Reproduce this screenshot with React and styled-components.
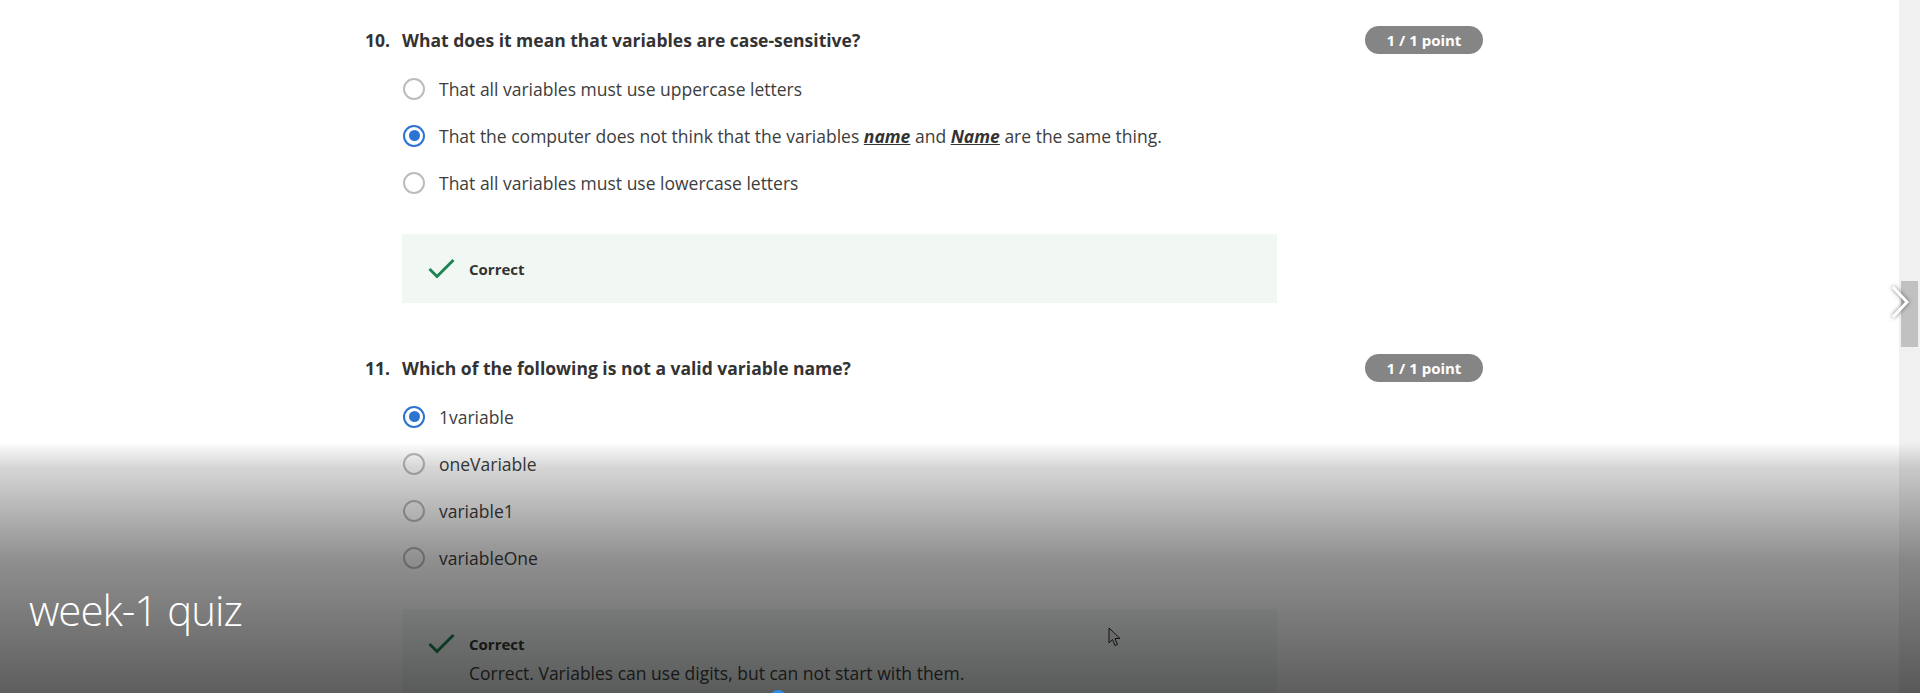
import React from "react";
import styled, { createGlobalStyle } from "styled-components";

const GlobalStyle = createGlobalStyle`
  html, body {
    margin: 0;
    padding: 0;
    background: #ffffff;
    overflow: hidden;
  }
  body {
    font-family: "Open Sans", "Liberation Sans", sans-serif;
    color: #333333;
  }
`;

const Page = styled.div`
  position: relative;
  display: flex;
  width: 1920px;
  height: 693px;
  overflow: hidden;
  background: #ffffff;
`;

const Content = styled.div`
  flex: 1;
  padding: 26px 0 0 365px;
`;

const Column = styled.div`
  width: 1118px;
`;

const Question = styled.section`
  margin-bottom: 51px;
`;

const QuestionHeader = styled.div`
  display: flex;
  align-items: center;
  height: 28px;
`;

const Number = styled.span`
  width: 37px;
  font-size: 17.5px;
  font-weight: 700;
  color: #333333;
`;

const Title = styled.h3`
  flex: 1;
  margin: 0;
  font-size: 17.5px;
  font-weight: 700;
  color: #333333;
`;

const Badge = styled.span`
  display: inline-flex;
  align-items: center;
  justify-content: center;
  width: 118px;
  height: 28px;
  border-radius: 14px;
  background: #858585;
  color: #ffffff;
  font-size: 15px;
  font-weight: 700;
`;

const Options = styled.div`
  margin-top: 11px;
  padding-left: 37px;
`;

const Option = styled.label`
  display: flex;
  align-items: center;
  height: 47px;
  gap: 14px;
  font-size: 17.5px;
  color: #3d3d3d;

  b {
    font-weight: 700;
    font-style: italic;
    text-decoration: underline;
    color: #333333;
  }
`;

const Radio = styled.span`
  position: relative;
  box-sizing: border-box;
  width: 22px;
  height: 22px;
  margin-left: 1px;
  border-radius: 50%;
  border: 2px solid ${(p) => (p.checked ? "#2b74d0" : "#bcbcbc")};
  flex-shrink: 0;

  &::after {
    content: "";
    display: ${(p) => (p.checked ? "block" : "none")};
    position: absolute;
    left: 3.5px;
    top: 3.5px;
    width: 11px;
    height: 11px;
    border-radius: 50%;
    background: #2b74d0;
  }
`;

const Feedback = styled.div`
  width: 875px;
  margin: 28px 0 0 37px;
  padding: 24px 26px;
  box-sizing: border-box;
  min-height: 69px;
  background: #f1f8f4;
`;

const FeedbackHead = styled.div`
  display: flex;
  align-items: center;
  gap: 14px;
  height: 21px;
  font-size: 15px;
  font-weight: 700;
  color: #333333;
`;

const FeedbackText = styled.p`
  margin: 7px 0 0 41px;
  font-size: 17.5px;
  line-height: 24px;
  color: #3d3d3d;
`;

const Scrollbar = styled.div`
  width: 21px;
  background: #f0f0f0;
  padding: 281px 2px 0 2px;
  box-sizing: border-box;
`;

const Thumb = styled.div`
  height: 66px;
  background: #c1c1c1;
`;

const NextArrow = styled.svg`
  position: absolute;
  left: 1889px;
  top: 283px;
  filter: drop-shadow(0 0 2px rgba(0, 0, 0, 0.55));
`;

const Shade = styled.div`
  position: absolute;
  left: 0;
  right: 0;
  top: 442px;
  bottom: 0;
  padding: 143px 0 0 29px;
  pointer-events: none;
  background: linear-gradient(
    to bottom,
    rgba(0, 0, 0, 0) 0%,
    rgba(0, 0, 0, 0.16) 10%,
    rgba(0, 0, 0, 0.44) 47%,
    rgba(0, 0, 0, 0.63) 100%
  );
`;

const VideoTitle = styled.div`
  font-family: "Open Sans", "Liberation Sans", sans-serif;
  font-weight: 300;
  font-size: 42px;
  line-height: 50px;
  letter-spacing: -1px;
  color: #ffffff;
`;

const Scrubber = styled.div`
  position: absolute;
  left: 770px;
  top: 690px;
  width: 16px;
  height: 16px;
  border-radius: 50%;
  background: #2d8fe6;
`;

const Cursor = styled.svg`
  position: absolute;
  left: 1108px;
  top: 627px;
`;

const Check = () => (
  <svg width="27" height="21" viewBox="0 0 27 21">
    <polyline
      points="1.5,11 9,18.5 25.5,2"
      fill="none"
      stroke="#1f8354"
      strokeWidth="3"
    />
  </svg>
);

const questions = [
  {
    n: "10.",
    title: "What does it mean that variables are case-sensitive?",
    options: [
      { text: "That all variables must use uppercase letters" },
      {
        text: (
          <>
            That the computer does not think that the variables <b>name</b> and{" "}
            <b>Name</b> are the same thing.
          </>
        ),
        checked: true,
      },
      { text: "That all variables must use lowercase letters" },
    ],
  },
  {
    n: "11.",
    title: "Which of the following is not a valid variable name?",
    options: [
      { text: "1variable", checked: true },
      { text: "oneVariable" },
      { text: "variable1" },
      { text: "variableOne" },
    ],
    explain: "Correct. Variables can use digits, but can not start with them.",
  },
];

export default function App() {
  return (
    <Page>
      <GlobalStyle />
      <Content>
        <Column>
          {questions.map((q) => (
            <Question key={q.n}>
              <QuestionHeader>
                <Number>{q.n}</Number>
                <Title>{q.title}</Title>
                <Badge>1 / 1 point</Badge>
              </QuestionHeader>
              <Options>
                {q.options.map((o, i) => (
                  <Option key={i}>
                    <Radio checked={o.checked} />
                    <span>{o.text}</span>
                  </Option>
                ))}
              </Options>
              <Feedback>
                <FeedbackHead>
                  <Check />
                  Correct
                </FeedbackHead>
                {q.explain && <FeedbackText>{q.explain}</FeedbackText>}
              </Feedback>
            </Question>
          ))}
        </Column>
      </Content>
      <Scrollbar>
        <Thumb />
      </Scrollbar>
      <NextArrow width="22" height="38" viewBox="0 0 22 38">
        <polyline
          points="4,4 18,19 4,34"
          fill="none"
          stroke="#ffffff"
          strokeWidth="3"
        />
      </NextArrow>
      <Shade>
        <VideoTitle>week-1 quiz</VideoTitle>
      </Shade>
      <Scrubber />
      <Cursor width="14" height="20" viewBox="0 0 14 20">
        <path
          d="M1,1 L1,16 L4.5,12.5 L7,18.5 L9.5,17.5 L7,11.5 L12,11.5 Z"
          fill="#6a6a6a"
          stroke="#111111"
          strokeWidth="1"
        />
      </Cursor>
    </Page>
  );
}
